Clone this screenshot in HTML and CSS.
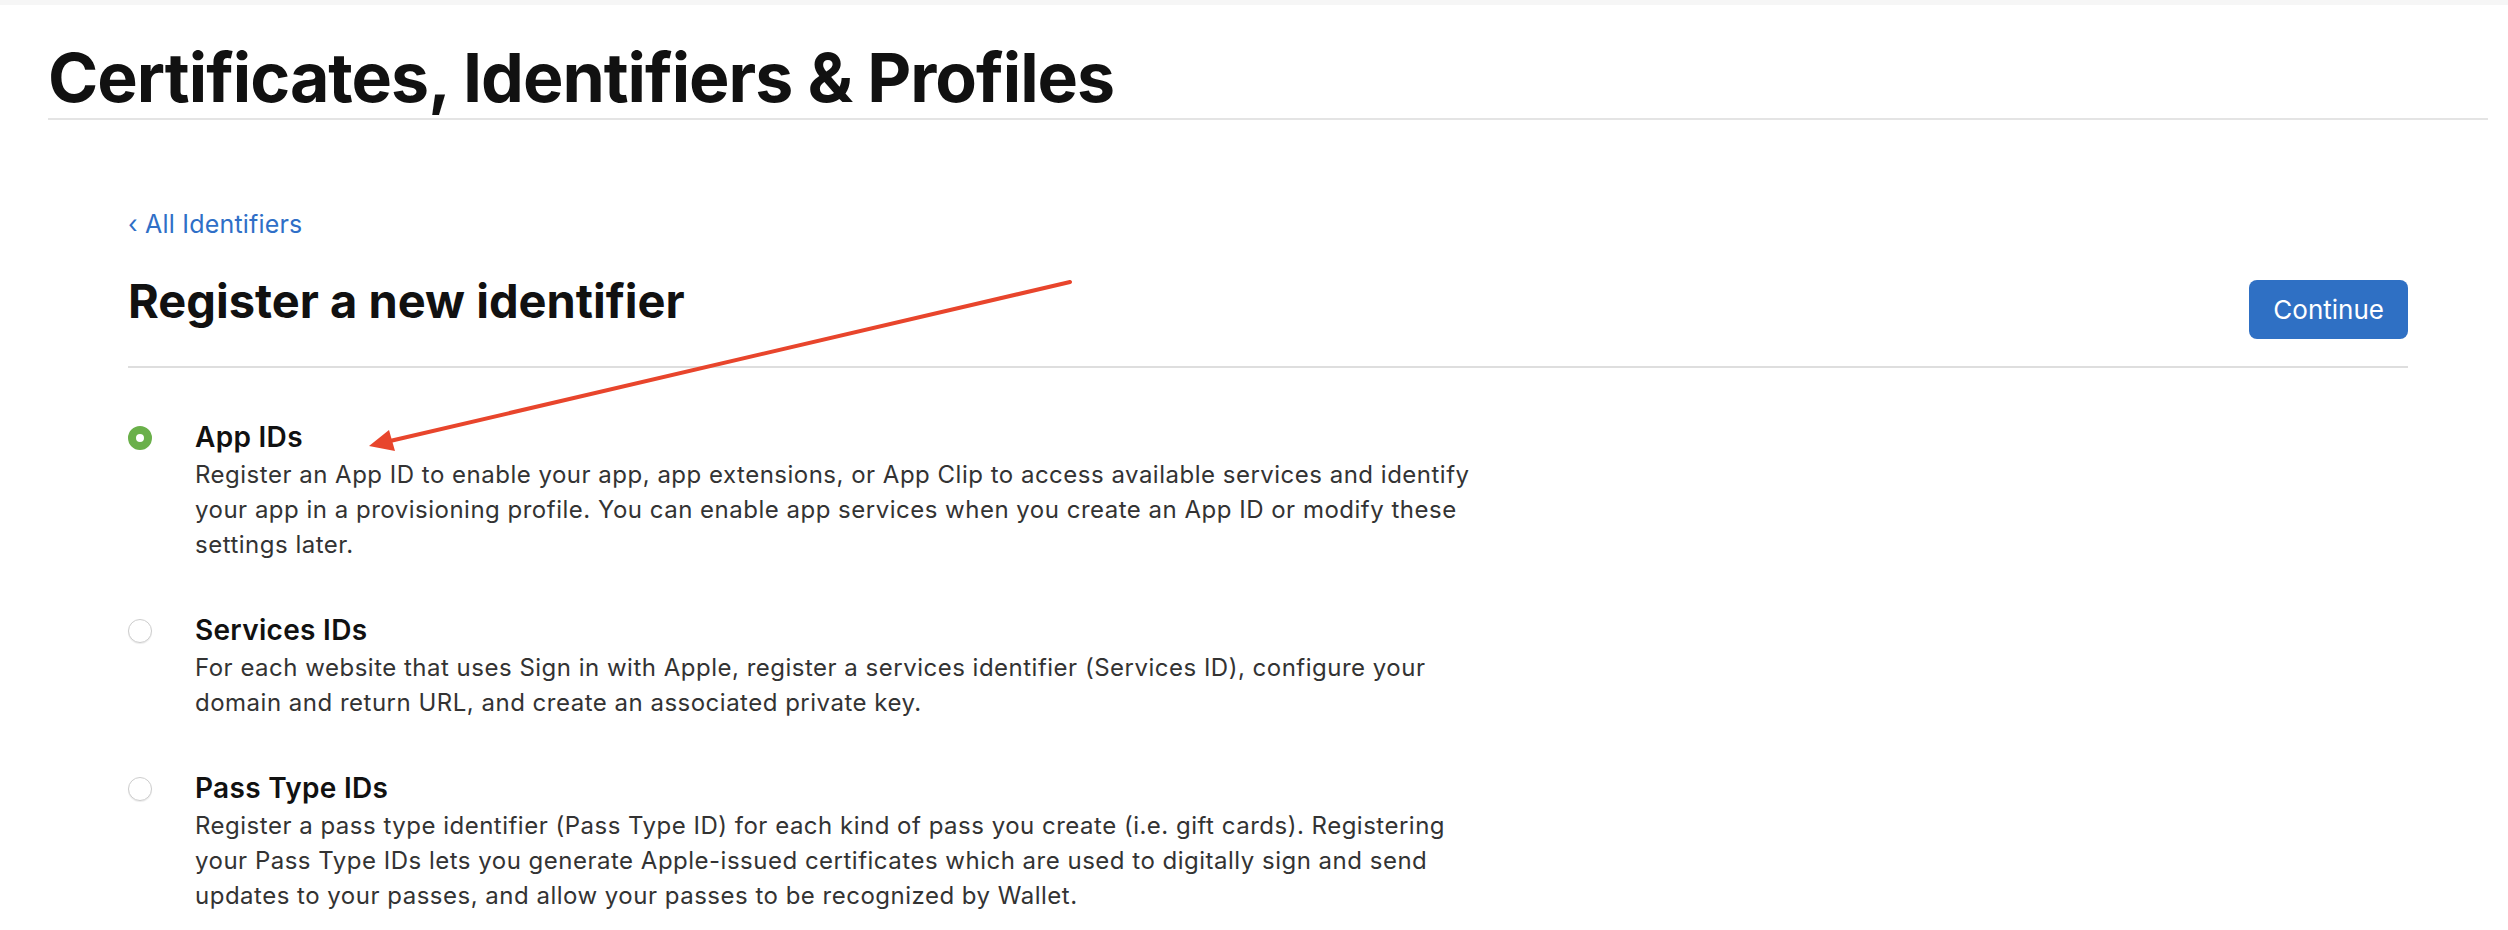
FILE: index.html
```html
<!DOCTYPE html>
<html lang="en">
<head>
<meta charset="utf-8">
<title>Certificates, Identifiers &amp; Profiles</title>
<link rel="stylesheet" href="styles.css">
</head>
<body>
<div class="topbar"></div>
<header class="page-header">
  <h1 class="page-title">Certificates, Identifiers &amp; Profiles</h1>
</header>
<main class="content">
  <a class="back-link" href="#">&#8249; All Identifiers</a>
  <div class="section-head">
    <h2 class="section-title">Register a new identifier</h2>
    <button class="btn-primary" type="button">Continue</button>
  </div>
  <ul class="options">
    <li class="option">
      <span class="radio radio-checked"></span>
      <div class="option-body">
        <div class="option-title">App IDs</div>
        <p class="option-desc">Register an App ID to enable your app, app extensions, or App Clip to access available services and identify your app in a provisioning profile. You can enable app services when you create an App ID or modify these settings later.</p>
      </div>
    </li>
    <li class="option">
      <span class="radio"></span>
      <div class="option-body">
        <div class="option-title">Services IDs</div>
        <p class="option-desc">For each website that uses Sign in with Apple, register a services identifier (Services ID), configure your domain and return URL, and create an associated private key.</p>
      </div>
    </li>
    <li class="option">
      <span class="radio"></span>
      <div class="option-body">
        <div class="option-title">Pass Type IDs</div>
        <p class="option-desc">Register a pass type identifier (Pass Type ID) for each kind of pass you create (i.e. gift cards). Registering your Pass Type IDs lets you generate Apple-issued certificates which are used to digitally sign and send updates to your passes, and allow your passes to be recognized by Wallet.</p>
      </div>
    </li>
  </ul>
</main>
<svg class="annotation" width="2508" height="930" viewBox="0 0 2508 930" aria-hidden="true">
  <line x1="1070" y1="282" x2="390" y2="441" stroke="#e8452c" stroke-width="4" stroke-linecap="round"/>
  <polygon points="369,446 395,451 389,430" fill="#e8452c"/>
</svg>
</body>
</html>
```

FILE: styles.css
```css
* { box-sizing: border-box; }

html, body {
  margin: 0;
  padding: 0;
  background: #ffffff;
  font-family: Inter, "Noto Sans", "Liberation Sans", sans-serif;
  color: #111111;
}

body {
  position: relative;
  width: 2508px;
  height: 930px;
  overflow: hidden;
}

.topbar {
  height: 5px;
  background: #f6f6f6;
}

.page-header {
  padding: 0 20px 0 48px;
}

.page-title {
  margin: 38px 0 0;
  padding-bottom: 7px;
  font-size: 68px;
  line-height: 68px;
  font-weight: 700;
  letter-spacing: -1px;
  color: #111111;
  border-bottom: 2px solid #e4e4e4;
}

.content {
  margin: 0 100px 0 128px;
  padding-top: 89px;
}

.back-link {
  display: block;
  font-size: 25px;
  line-height: 30px;
  letter-spacing: 0.2px;
  color: #2f6fc7;
  text-decoration: none;
}

.section-head {
  display: flex;
  justify-content: space-between;
  align-items: flex-end;
  margin-top: 34px;
  padding-bottom: 27px;
  border-bottom: 2px solid #dedede;
}

.section-title {
  margin: 0 0 10px;
  font-size: 47px;
  line-height: 56px;
  font-weight: 700;
  letter-spacing: 0;
  color: #111111;
}

.btn-primary {
  height: 59px;
  padding: 0 24px;
  border: none;
  border-radius: 8px;
  background: #2f70c4;
  color: #ffffff;
  font-family: inherit;
  font-size: 26px;
  font-weight: 400;
}

.options {
  list-style: none;
  margin: 0;
  padding: 51px 0 0;
}

.option {
  display: flex;
  gap: 43px;
  margin-bottom: 50px;
}

.radio {
  flex: none;
  width: 24px;
  height: 24px;
  margin-top: 7px;
  border-radius: 50%;
  background: #ffffff;
  border: 1px solid #cdcdcd;
  box-shadow: 0 1px 1px rgba(0, 0, 0, 0.08);
}

.radio-checked {
  border: 8px solid #6ab04a;
  box-shadow: none;
}

.option-body {
  width: 1300px;
}

.option-title {
  font-size: 28px;
  line-height: 36px;
  font-weight: 600;
  letter-spacing: 0.3px;
  color: #111111;
}

.option-desc {
  margin: 2px 0 0;
  font-size: 24px;
  line-height: 35px;
  letter-spacing: 0.5px;
  color: #333333;
}

.annotation {
  position: absolute;
  left: 0;
  top: 0;
  pointer-events: none;
}
```
